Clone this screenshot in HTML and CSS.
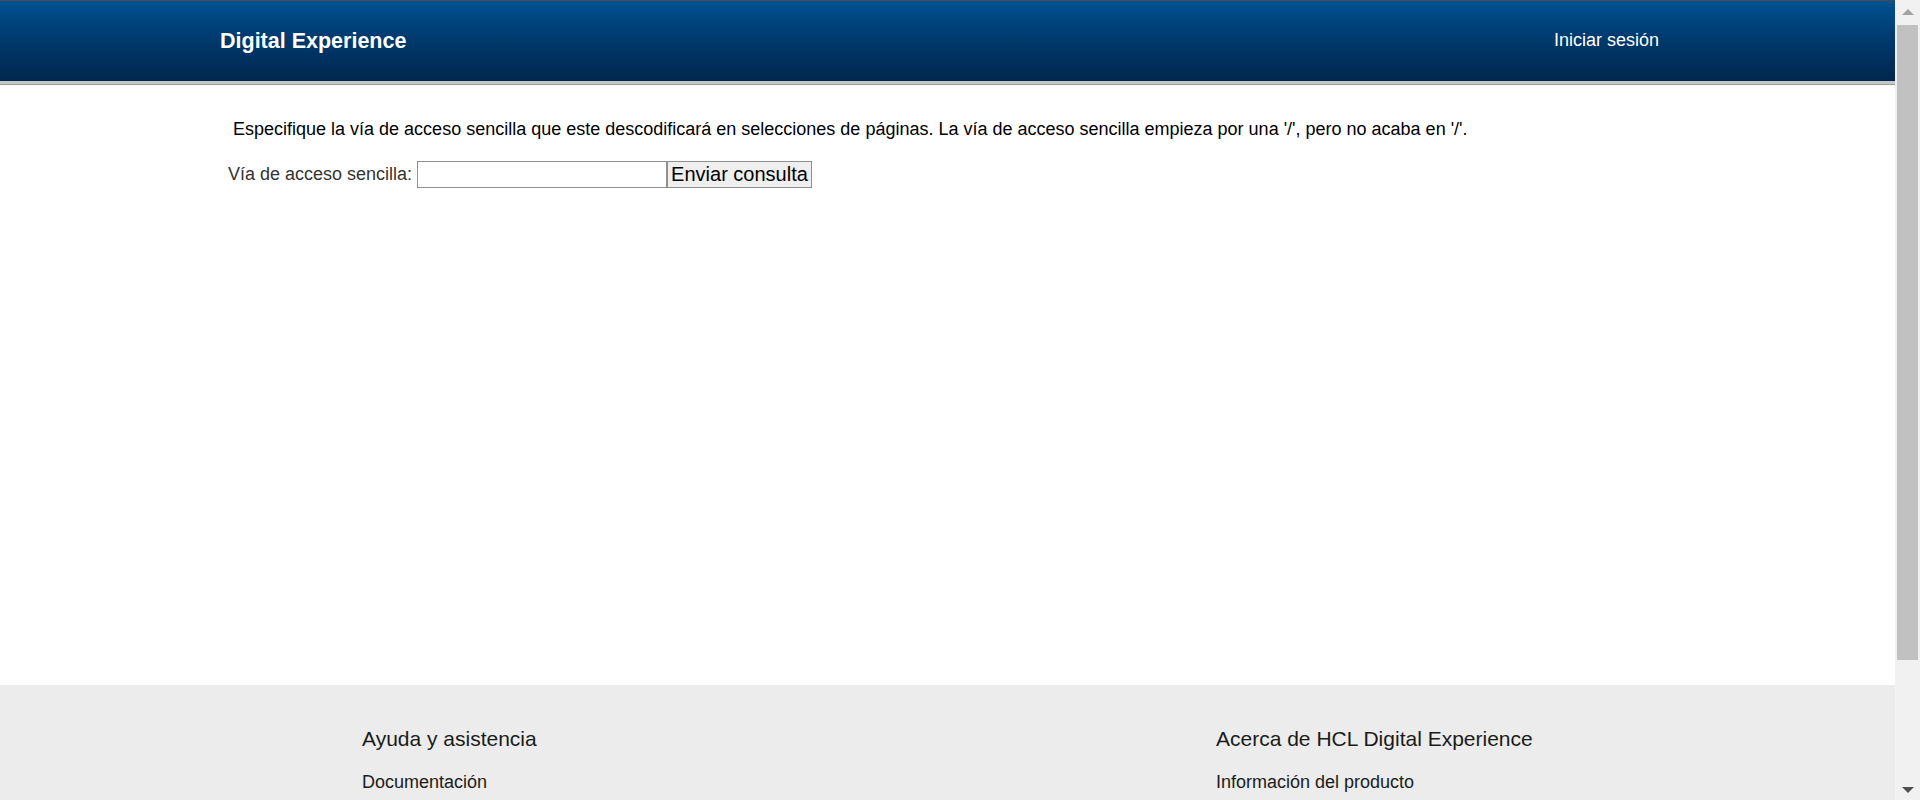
FILE: index.html
```html
<!DOCTYPE html>
<html lang="es">
<head>
<meta charset="utf-8">
<title>Digital Experience</title>
<link rel="stylesheet" href="styles.css">
</head>
<body>
<div class="page">
  <header class="masthead">
    <div class="masthead-inner">
      <a class="brand" href="#">Digital Experience</a>
      <a class="login" href="#">Iniciar sesión</a>
    </div>
  </header>
  <main class="content">
    <p class="intro">Especifique la vía de acceso sencilla que este descodificará en selecciones de páginas. La vía de acceso sencilla empieza por una '/', pero no acaba en '/'.</p>
    <form class="path-form">
      <label class="path-label" for="path">Vía de acceso sencilla:</label><input class="path-input" id="path" type="text"><button class="path-submit" type="button">Enviar consulta</button>
    </form>
  </main>
  <footer class="footer">
    <div class="footer-grid">
      <section class="footer-col">
        <h2 class="footer-title">Ayuda y asistencia</h2>
        <a class="footer-link" href="#">Documentación</a>
      </section>
      <section class="footer-col">
        <h2 class="footer-title">Acerca de HCL Digital Experience</h2>
        <a class="footer-link" href="#">Información del producto</a>
      </section>
    </div>
  </footer>
</div>
<div class="scrollbar" aria-hidden="true">
  <div class="sb-button sb-up"><span class="sb-arrow-up"></span></div>
  <div class="sb-track"><div class="sb-thumb"></div></div>
  <div class="sb-button sb-down"><span class="sb-arrow-down"></span></div>
</div>
</body>
</html>
```
FILE: styles.css
```css
body {
  margin: 0;
  font-family: "Liberation Sans", Arial, sans-serif;
  color: #000;
  background: #fff;
}

.page {
  margin-right: 25px;
}

/* classic browser scrollbar, drawn over the right edge */
.scrollbar {
  position: fixed;
  top: 0;
  right: 0;
  width: 25px;
  height: 100vh;
  background: #f1f1f1;
  display: flex;
  flex-direction: column;
}

.sb-button {
  height: 25px;
  flex: none;
  display: flex;
  justify-content: center;
  align-items: center;
}

.sb-arrow-up {
  width: 0;
  height: 0;
  border-left: 6px solid transparent;
  border-right: 6px solid transparent;
  border-bottom: 6px solid #a3a3a3;
  margin-top: -1px;
}

.sb-arrow-down {
  width: 0;
  height: 0;
  border-left: 6px solid transparent;
  border-right: 6px solid transparent;
  border-top: 6px solid #505050;
  margin-top: 4px;
}

.sb-track {
  flex: 1;
  padding: 0 2px;
}

.sb-thumb {
  height: 635px;
  background: #c1c1c1;
}

.masthead {
  border-top: 1px solid #4b4b4b;
  border-bottom: 1px solid #9a9a9a;
  background: linear-gradient(to bottom, #005191 0%, #003a6e 45%, #00254b 100%);
  box-shadow: inset 0 -3px 0 #c6c6c6;
  height: 85px;
  box-sizing: border-box;
}

.masthead-inner {
  display: flex;
  justify-content: space-between;
  align-items: flex-start;
  padding: 27px 236px 0 220px;
}

.brand {
  color: #fff;
  text-decoration: none;
  font-weight: bold;
  font-size: 21.5px;
  line-height: 26px;
}

.login {
  color: #fff;
  text-decoration: none;
  font-size: 18px;
  line-height: 22px;
  margin-top: 1px;
}

.content {
  height: 600px;
  box-sizing: border-box;
  padding-top: 33px;
}

.intro {
  margin: 0 0 21px;
  padding-left: 233px;
  font-size: 18px;
  line-height: 22px;
}

.path-form {
  display: flex;
  align-items: center;
  padding-left: 228px;
}

.path-label {
  font-size: 18px;
  color: #333;
  margin-right: 5px;
}

.path-input {
  width: 250px;
  height: 27px;
  box-sizing: border-box;
  border: 1px solid #8f8f8f;
  margin: 0;
  padding: 1px 3px;
  font-size: 18px;
}

.path-submit {
  height: 27px;
  box-sizing: border-box;
  margin: 0;
  padding: 0 3px;
  border: 1px solid #8f8f8f;
  background: #efefef;
  font-family: "Liberation Sans", Arial, sans-serif;
  font-size: 20px;
  color: #000;
}

.footer {
  background: #ececec;
  padding: 41px 0 120px 362px;
}

.footer-grid {
  display: grid;
  grid-template-columns: 854px 1fr;
}

.footer-title {
  margin: 0 0 21px;
  font-weight: normal;
  font-size: 21px;
  line-height: 25px;
  color: #1b1b1b;
}

.footer-link {
  display: block;
  color: #1b1b1b;
  text-decoration: none;
  font-size: 18px;
  line-height: 21px;
}
```
